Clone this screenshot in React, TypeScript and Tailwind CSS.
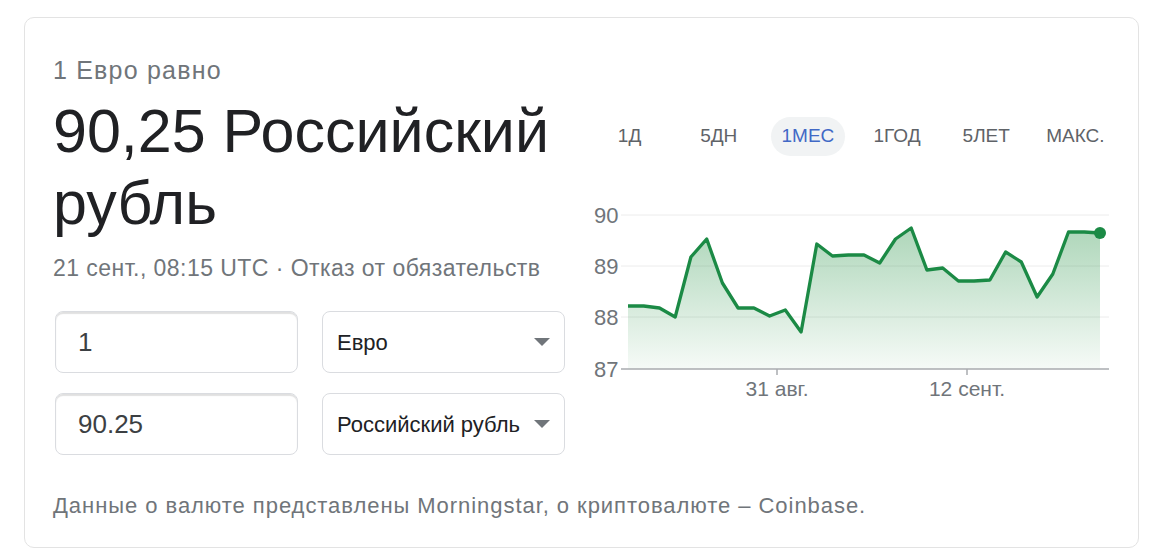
import React from 'react';

const font = { fontFamily: '"Liberation Sans", Arial, sans-serif' };

const tabs = ['1Д', '5ДН', '1МЕС', '1ГОД', '5ЛЕТ', 'МАКС.'];

// курс за месяц, в пикселях графика
const ys = [306, 306, 308, 317, 257, 239, 283, 308, 308, 316, 310, 332, 244, 256, 255, 255, 263, 239, 228, 270, 268, 281, 281, 280, 252, 262, 297, 274, 232, 232, 233];
const x0 = 628;
const step = 472 / (ys.length - 1);
const pts = ys.map((y, i) => [x0 + i * step, y] as const);
const line = pts.map(([x, y]) => `${x.toFixed(1)},${y}`).join(' ');
const area = `${x0},369 ${line} ${(x0 + 472).toFixed(1)},369`;

const Chart: React.FC = () => (
  <svg width={535} height={215} viewBox="585 195 535 215" className="block">
    <defs>
      <linearGradient id="fill" x1="0" y1="0" x2="0" y2="1">
        <stop offset="0%" stopColor="#1e8e3e" stopOpacity={0.36} />
        <stop offset="100%" stopColor="#1e8e3e" stopOpacity={0.04} />
      </linearGradient>
    </defs>
    {[215, 266, 317].map((y) => (
      <line key={y} x1={621} x2={1109} y1={y} y2={y} stroke="#ececec" strokeWidth={1} />
    ))}
    <polygon points={area} fill="url(#fill)" />
    <line x1={621} x2={1109} y1={369} y2={369} stroke="#a8abaf" strokeWidth={1.5} />
    <line x1={777} x2={777} y1={369} y2={375} stroke="#a8abaf" strokeWidth={1.5} />
    <line x1={967} x2={967} y1={369} y2={375} stroke="#a8abaf" strokeWidth={1.5} />
    <polyline points={line} fill="none" stroke="#1b8a45" strokeWidth={3.3} strokeLinejoin="round" />
    <circle cx={1100} cy={233} r={6} fill="#1b8a45" />
    <g fill="#70757a" fontSize={22} style={font}>
      <text x={594} y={223}>90</text>
      <text x={594} y={274}>89</text>
      <text x={594} y={325}>88</text>
      <text x={594} y={377}>87</text>
    </g>
    <g fill="#70757a" fontSize={21} style={font}>
      <text x={777} y={396} textAnchor="middle">31 авг.</text>
      <text x={967} y={396} textAnchor="middle">12 сент.</text>
    </g>
  </svg>
);

const Field: React.FC<{ value: string }> = ({ value }) => (
  <div className="w-[243px] h-[62px] rounded-[8px] border border-[#dadce0] shadow-[inset_0_2px_1px_rgba(0,0,0,0.12)] flex items-center pl-[22px] text-[26px] text-[#3c4043]">
    {value}
  </div>
);

const Select: React.FC<{ value: string }> = ({ value }) => (
  <div className="w-[243px] h-[62px] rounded-[8px] border border-[#dadce0] flex items-center justify-between pl-[14px] pr-[14px] text-[22px] text-[#202124]">
    <span>{value}</span>
    <svg width={16} height={8} viewBox="0 0 16 8">
      <path d="M0 0h16L8 8z" fill="#70757a" />
    </svg>
  </div>
);

export default function App() {
  return (
    <div className="min-h-screen bg-white pt-[17px] pl-[24px]" style={font}>
      <div className="w-[1115px] h-[531px] rounded-[10px] border border-[#e3e3e3] flex">
        <div className="w-[540px] pl-[28px] pt-[38px] flex flex-col">
          <div className="text-[25px] leading-[28px] tracking-[1.2px] text-[#70757a]">1 Евро равно</div>
          <div className="mt-[11px] text-[61px] leading-[72px] text-[#202124]">
            90,25 Российский рубль
          </div>
          <div className="mt-[16px] text-[23px] leading-[26px] tracking-[0.45px] text-[#70757a] whitespace-nowrap">
            21 сент., 08:15 UTC · Отказ от обязательств
          </div>
          <div className="mt-[30px] ml-[2px] flex flex-col gap-[20px]">
            <div className="flex gap-[24px]">
              <Field value="1" />
              <Select value="Евро" />
            </div>
            <div className="flex gap-[24px]">
              <Field value="90.25" />
              <Select value="Российский рубль" />
            </div>
          </div>
          <div className="mt-[38px] text-[22px] leading-[26px] tracking-[0.95px] text-[#70757a] whitespace-nowrap">
            Данные о валюте представлены Morningstar, о криптовалюте – Coinbase.
          </div>
        </div>
        <div className="pl-[20px] pt-[99px] flex flex-col">
          <div className="grid grid-cols-6 w-[535px] h-[39px]">
            {tabs.map((t) => (
              <div key={t} className="flex items-center justify-center">
                <span
                  className={
                    t === '1МЕС'
                      ? 'h-[39px] px-[11px] rounded-full bg-[#f1f3f4] text-[#4169c6] text-[19px] flex items-center'
                      : 'text-[19px] text-[#5f6368]'
                  }
                >
                  {t}
                </span>
              </div>
            ))}
          </div>
          <div className="mt-[39px]">
            <Chart />
          </div>
        </div>
      </div>
    </div>
  );
}
